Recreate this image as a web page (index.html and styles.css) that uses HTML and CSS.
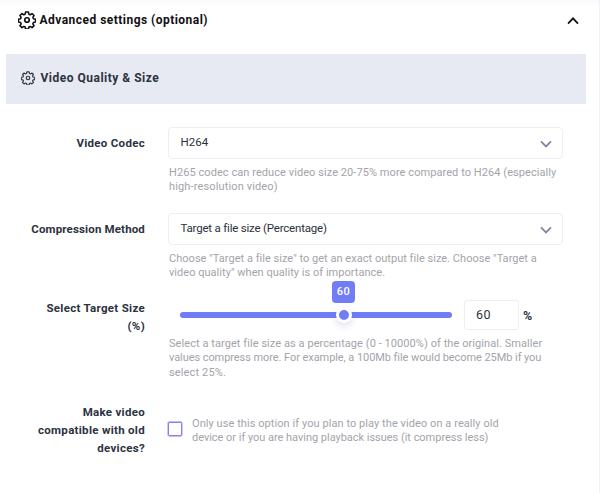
FILE: index.html
```html
<!DOCTYPE html>
<html lang="en">
<head>
<meta charset="utf-8">
<title>Advanced settings</title>
<link rel="stylesheet" href="styles.css">
</head>
<body>
<svg class="defs" width="0" height="0" aria-hidden="true">
  <symbol id="gear" viewBox="0 0 24 24">
    <path d="M10 2h4l.6 3 2 .8 2.5-1.7 2.8 2.8-1.7 2.5.8 2 3 .6v4l-3 .6-.8 2 1.7 2.5-2.8 2.8-2.5-1.7-2 .8-.6 3h-4l-.6-3-2-.8-2.5 1.7-2.8-2.8 1.7-2.5-.8-2-3-.6v-4l3-.6.8-2-1.7-2.5 2.8-2.8 2.5 1.7 2-.8z" transform="translate(.6 -.5) scale(.95)"/>
    <circle cx="12" cy="12" r="3"/>
  </symbol>
</svg>
<main class="panel">
  <header class="panel-head">
    <svg class="gear gear-lg"><use href="#gear"/></svg>
    <h1>Advanced settings (optional)</h1>
    <svg class="collapse" viewBox="0 0 12 8"><path d="M1 6.6 6 1.4l5 5.2"/></svg>
  </header>
  <div class="section-head">
    <svg class="gear gear-sm"><use href="#gear"/></svg>
    <h2>Video Quality &amp; Size</h2>
  </div>
  <form class="fields">
    <div class="row row-codec">
      <div class="label">Video Codec</div>
      <div class="control">
        <div class="select"><span class="value-codec">H264</span><svg class="chevron" viewBox="0 0 12 8"><path d="M1 1.4 6 6.4l5-5"/></svg></div>
        <p class="hint"><span class="wide">H265 codec can reduce video size 20-75% more compared to H264 (especially</span><br><span class="wider">high-resolution video)</span></p>
      </div>
    </div>
    <div class="row row-method">
      <div class="label">Compression Method</div>
      <div class="control">
        <div class="select"><span class="value-method">Target a file size (Percentage)</span><svg class="chevron" viewBox="0 0 12 8"><path d="M1 1.4 6 6.4l5-5"/></svg></div>
        <p class="hint"><span>Choose "Target a file size" to get an exact output file size. Choose "Target a</span><br><span>video quality" when quality is of importance.</span></p>
      </div>
    </div>
    <div class="row row-size">
      <div class="label">Select Target Size<br>(%)</div>
      <div class="control">
        <div class="slider-line">
          <div class="track"><div class="thumb"></div><div class="bubble">60</div></div>
          <div class="number">60</div>
          <span class="unit">%</span>
        </div>
        <p class="hint"><span class="wide">Select a target file size as a percentage (0 - 10000%) of the original. Smaller</span><br><span class="tight">values compress more. For example, a 100Mb file would become 25Mb if you</span><br><span class="wider">select 25%.</span></p>
      </div>
    </div>
    <div class="row row-compat">
      <div class="label">Make video<br>compatible with old<br>devices?</div>
      <div class="control check-line">
        <div class="checkbox"></div>
        <p class="hint"><span class="wide">Only use this option if you plan to play the video on a really old</span><br><span class="snug">device or if you are having playback issues (it compress less)</span></p>
      </div>
    </div>
  </form>
</main>
</body>
</html>
```
FILE: styles.css
```css
* { box-sizing: border-box; }
body { margin: 0; background: #fff; font-family: Roboto, "Liberation Sans", sans-serif; color: #2b3240; }
h1, h2, p { margin: 0; }
.defs { display: block; }
.panel { height: 493px; width: 600px; overflow: hidden; border-right: 1px solid #f3f3f5; background: linear-gradient(#fafafa, #fff 8px); }
.panel-head { display: flex; align-items: center; height: 54px; padding: 0 20px 14px 18px; }
.gear { fill: none; flex: none; stroke-linejoin: round; }
.gear-lg { width: 18px; height: 18px; stroke: #111; stroke-width: 2.2; }
.gear-sm { width: 14px; height: 14px; stroke: #2f3644; stroke-width: 2.1; margin-top: 1px; }
h1 { font-size: 12px; font-weight: 700; color: #111; letter-spacing: .47px; margin-left: 3.5px; line-height: 18px; white-space: nowrap; }
.collapse { width: 12px; height: 8px; margin: 2px 0 0 auto; fill: none; stroke: #111; stroke-width: 1.8; }
.section-head { display: flex; align-items: center; height: 50px; width: 580px; margin-left: 6px; padding: 0 0 3px 15px; background: #e7eaf3; }
h2 { font-size: 12px; font-weight: 700; letter-spacing: .5px; margin-left: 5.5px; line-height: 18px; white-space: nowrap; }
.fields { padding: 23px 0 0; }
.row { display: grid; grid-template-columns: 145px 395px; column-gap: 23px; }
.row-codec, .row-method { height: 86px; }
.row-size { height: 104px; }
.label { text-align: right; font-size: 11.5px; font-weight: 700; line-height: 18px; letter-spacing: .3px; padding-top: 7px; white-space: nowrap; }
.row-method .label { letter-spacing: .15px; }
.select { display: flex; align-items: center; justify-content: space-between; height: 32px; border: 1px solid #eeeef2; border-radius: 4px; padding: 0 10px 2px 11.5px; font-size: 11.5px; white-space: nowrap; }
.value-method { letter-spacing: -.2px; }
.chevron { width: 12px; height: 8px; margin-top: 4px; fill: none; stroke: #7d86a2; stroke-width: 1.8; }
.hint { font-size: 11px; line-height: 14.4px; color: #a3a4aa; letter-spacing: .03px; white-space: nowrap; padding: 7px 0 0 1px; }
.wide { letter-spacing: .068px; }
.wider { letter-spacing: .14px; }
.snug { letter-spacing: -.025px; }
.tight { letter-spacing: -.07px; }
.row-size .label { padding-top: 0; }
.slider-line { display: flex; align-items: center; height: 30px; padding-left: 12px; margin-top: 1px; }
.track { position: relative; width: 272px; height: 6px; border-radius: 3px; background: #727cf5; }
.thumb { position: absolute; left: 155.5px; top: -5px; width: 16px; height: 16px; border: 3px solid #fff; border-radius: 50%; background: #727cf5; box-shadow: 0 3px 7px rgba(80, 90, 200, .18); }
.bubble { position: absolute; left: 152px; top: -31px; width: 23px; height: 22px; border-radius: 4px; background: #727cf5; color: #fff; font-size: 11px; font-weight: 500; letter-spacing: .6px; text-align: center; line-height: 21px; }
.number { width: 55px; height: 30px; margin-left: 12px; border: 1px solid #eeeef2; border-radius: 3px; padding-left: 11px; font-size: 12.5px; line-height: 28px; letter-spacing: .5px; }
.unit { margin-left: 4px; font-size: 12.5px; font-weight: 700; }
.row-size .hint { padding-top: 7px; }
.row-compat .label { padding-top: 0; }
.check-line { display: flex; align-items: flex-start; }
.checkbox { width: 14px; height: 14px; margin-top: 19px; border: 1.5px solid #837ff5; border-radius: 1px; flex: none; box-shadow: 0 0 0 .4px #837ff5; }
.row-compat .hint { padding: 14px 0 0 10px; }
```
